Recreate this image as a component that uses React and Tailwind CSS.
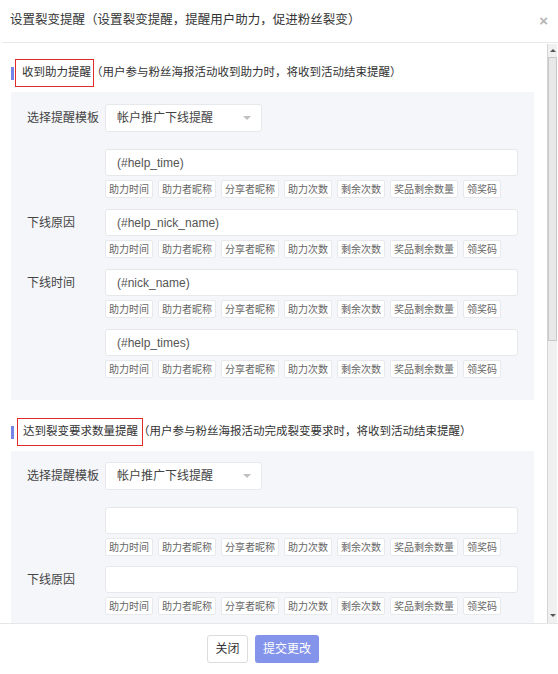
import React from "react";

const TAGS = ["助力时间", "助力者昵称", "分享者昵称", "助力次数", "剩余次数", "奖品剩余数量", "领奖码"];

function fw(str) {
  return Array.from(str).map((ch, i) => {
    if (ch === "（") {
      return (
        <span key={i} className="inline-block w-[1em] text-right">
          {ch}
        </span>
      );
    }
    if (ch === "）" || ch === "，") {
      return (
        <span key={i} className="inline-block w-[1em] text-left">
          {ch}
        </span>
      );
    }
    return ch;
  });
}

function SectionHeader({ title, desc, ml, boxL, boxR }) {
  return (
    <div className="flex h-[28px] items-center">
      <div className="h-[13px] w-[3px] bg-[#7385e6]" />
      <span className={`relative flex h-full items-center text-[11.5px] text-[#333] ${ml}`}>
        <span className={`pointer-events-none absolute top-0 bottom-0 border-[1.5px] border-[#e12b2b] ${boxL} ${boxR}`} />
        {title}
      </span>
      <span className="text-[11.5px] text-[#333]">{fw(desc)}</span>
    </div>
  );
}

function SelectRow() {
  return (
    <div className="flex items-center">
      <div className="w-[94px] pl-[16px] text-[12px] text-[#444]">选择提醒模板</div>
      <div className="flex h-[28px] w-[157px] items-center justify-between rounded-[3px] border border-[#e6e8ec] bg-white pl-[11px] pr-[10px]">
        <span className="text-[12px] text-[#444]">帐户推广下线提醒</span>
        <span className="h-0 w-0 border-x-[4px] border-t-[4px] border-x-transparent border-t-[#c0c0c0]" />
      </div>
    </div>
  );
}

function InputGroup({ label, value, mt }) {
  return (
    <div className={`flex ${mt}`}>
      <div className="flex h-[27px] w-[94px] items-center pl-[16px] text-[12px] text-[#444]">{label}</div>
      <div className="flex-1">
        <div className="flex h-[27px] items-center rounded-[3px] border border-[#e6e8ec] bg-white px-[11px] text-[12px] text-[#555]">
          {value}
        </div>
        <div className="mt-[4px] flex gap-[5px]">
          {TAGS.map((t) => (
            <span
              key={t}
              className="flex h-[18px] items-center rounded-[2px] border border-[#e8e9ec] bg-white px-[3px] text-[10px] text-[#666]"
            >
              {t}
            </span>
          ))}
        </div>
      </div>
    </div>
  );
}

export default function App() {
  return (
    <div
      lang="zh-CN"
      className="flex h-[674px] w-[558px] flex-col overflow-hidden bg-white font-['Liberation_Sans','Noto_Sans_CJK_SC',sans-serif]"
    >
      <div className="ml-[2px] flex h-[43px] shrink-0 items-center justify-between border-b border-[#e8e8e8] pl-[8px] pr-[10px] pb-[2px]">
        <span className="text-[12.5px] text-[#333]">
          {fw("设置裂变提醒（设置裂变提醒，提醒用户助力，促进粉丝裂变）")}
        </span>
        <span className="text-[15px] font-bold leading-none text-[#b5b5b5]">×</span>
      </div>

      <div className="flex h-[580px] shrink-0">
        <div className="flex-1 overflow-hidden pl-[11px] pr-[13px] pt-[16px]">
          <SectionHeader
            title="收到助力提醒"
            desc="（用户参与粉丝海报活动收到助力时，将收到活动结束提醒）"
            ml="ml-[8px]"
            boxL="-left-[7px]"
            boxR="-right-[3px]"
          />
          <div className="mt-[5px] bg-[#f5f6fa] pb-[22px] pr-[16px] pt-[12px]">
            <SelectRow />
            <InputGroup label="" value="(#help_time)" mt="mt-[17px]" />
            <InputGroup label="下线原因" value="(#help_nick_name)" mt="mt-[11px]" />
            <InputGroup label="下线时间" value="(#nick_name)" mt="mt-[11px]" />
            <InputGroup label="" value="(#help_times)" mt="mt-[11px]" />
          </div>

          <div className="mt-[18px]">
            <SectionHeader
              title="达到裂变要求数量提醒"
              desc="（用户参与粉丝海报活动完成裂变要求时，将收到活动结束提醒）"
              ml="ml-[9px]"
              boxL="-left-[6px]"
              boxR="-right-[5px]"
            />
          </div>
          <div className="mt-[5px] bg-[#f5f6fa] pb-[22px] pr-[16px] pt-[11px]">
            <SelectRow />
            <InputGroup label="" value="" mt="mt-[17px]" />
            <InputGroup label="下线原因" value="" mt="mt-[10px]" />
          </div>
        </div>

        <div className="mr-[1px] mt-[1px] flex w-[10px] flex-col border-l border-[#d4d4d4] bg-[#f0f0f0]">
          <div className="flex h-[13px] items-center justify-center">
            <span className="h-0 w-0 border-x-[3px] border-b-[3px] border-x-transparent border-b-[#555]" />
          </div>
          <div className="h-[284px] border border-[#c8c8c8] bg-[#e8e8e8]" />
          <div className="flex-1" />
          <div className="mb-[1px] flex h-[13px] items-center justify-center">
            <span className="h-0 w-0 border-x-[3px] border-t-[3px] border-x-transparent border-t-[#555]" />
          </div>
        </div>
      </div>

      <div className="flex h-[51px] shrink-0 items-center justify-center gap-[7px] border-t border-[#e6e6e6] pr-[32px]">
        <button className="flex h-[28px] w-[41px] items-center justify-center rounded-[3px] border border-[#dcdcdc] bg-white text-[12px] text-[#333]">
          关闭
        </button>
        <button className="flex h-[28px] w-[64px] items-center justify-center rounded-[3px] bg-[#8494ea] text-[12px] text-white">
          提交更改
        </button>
      </div>
    </div>
  );
}
